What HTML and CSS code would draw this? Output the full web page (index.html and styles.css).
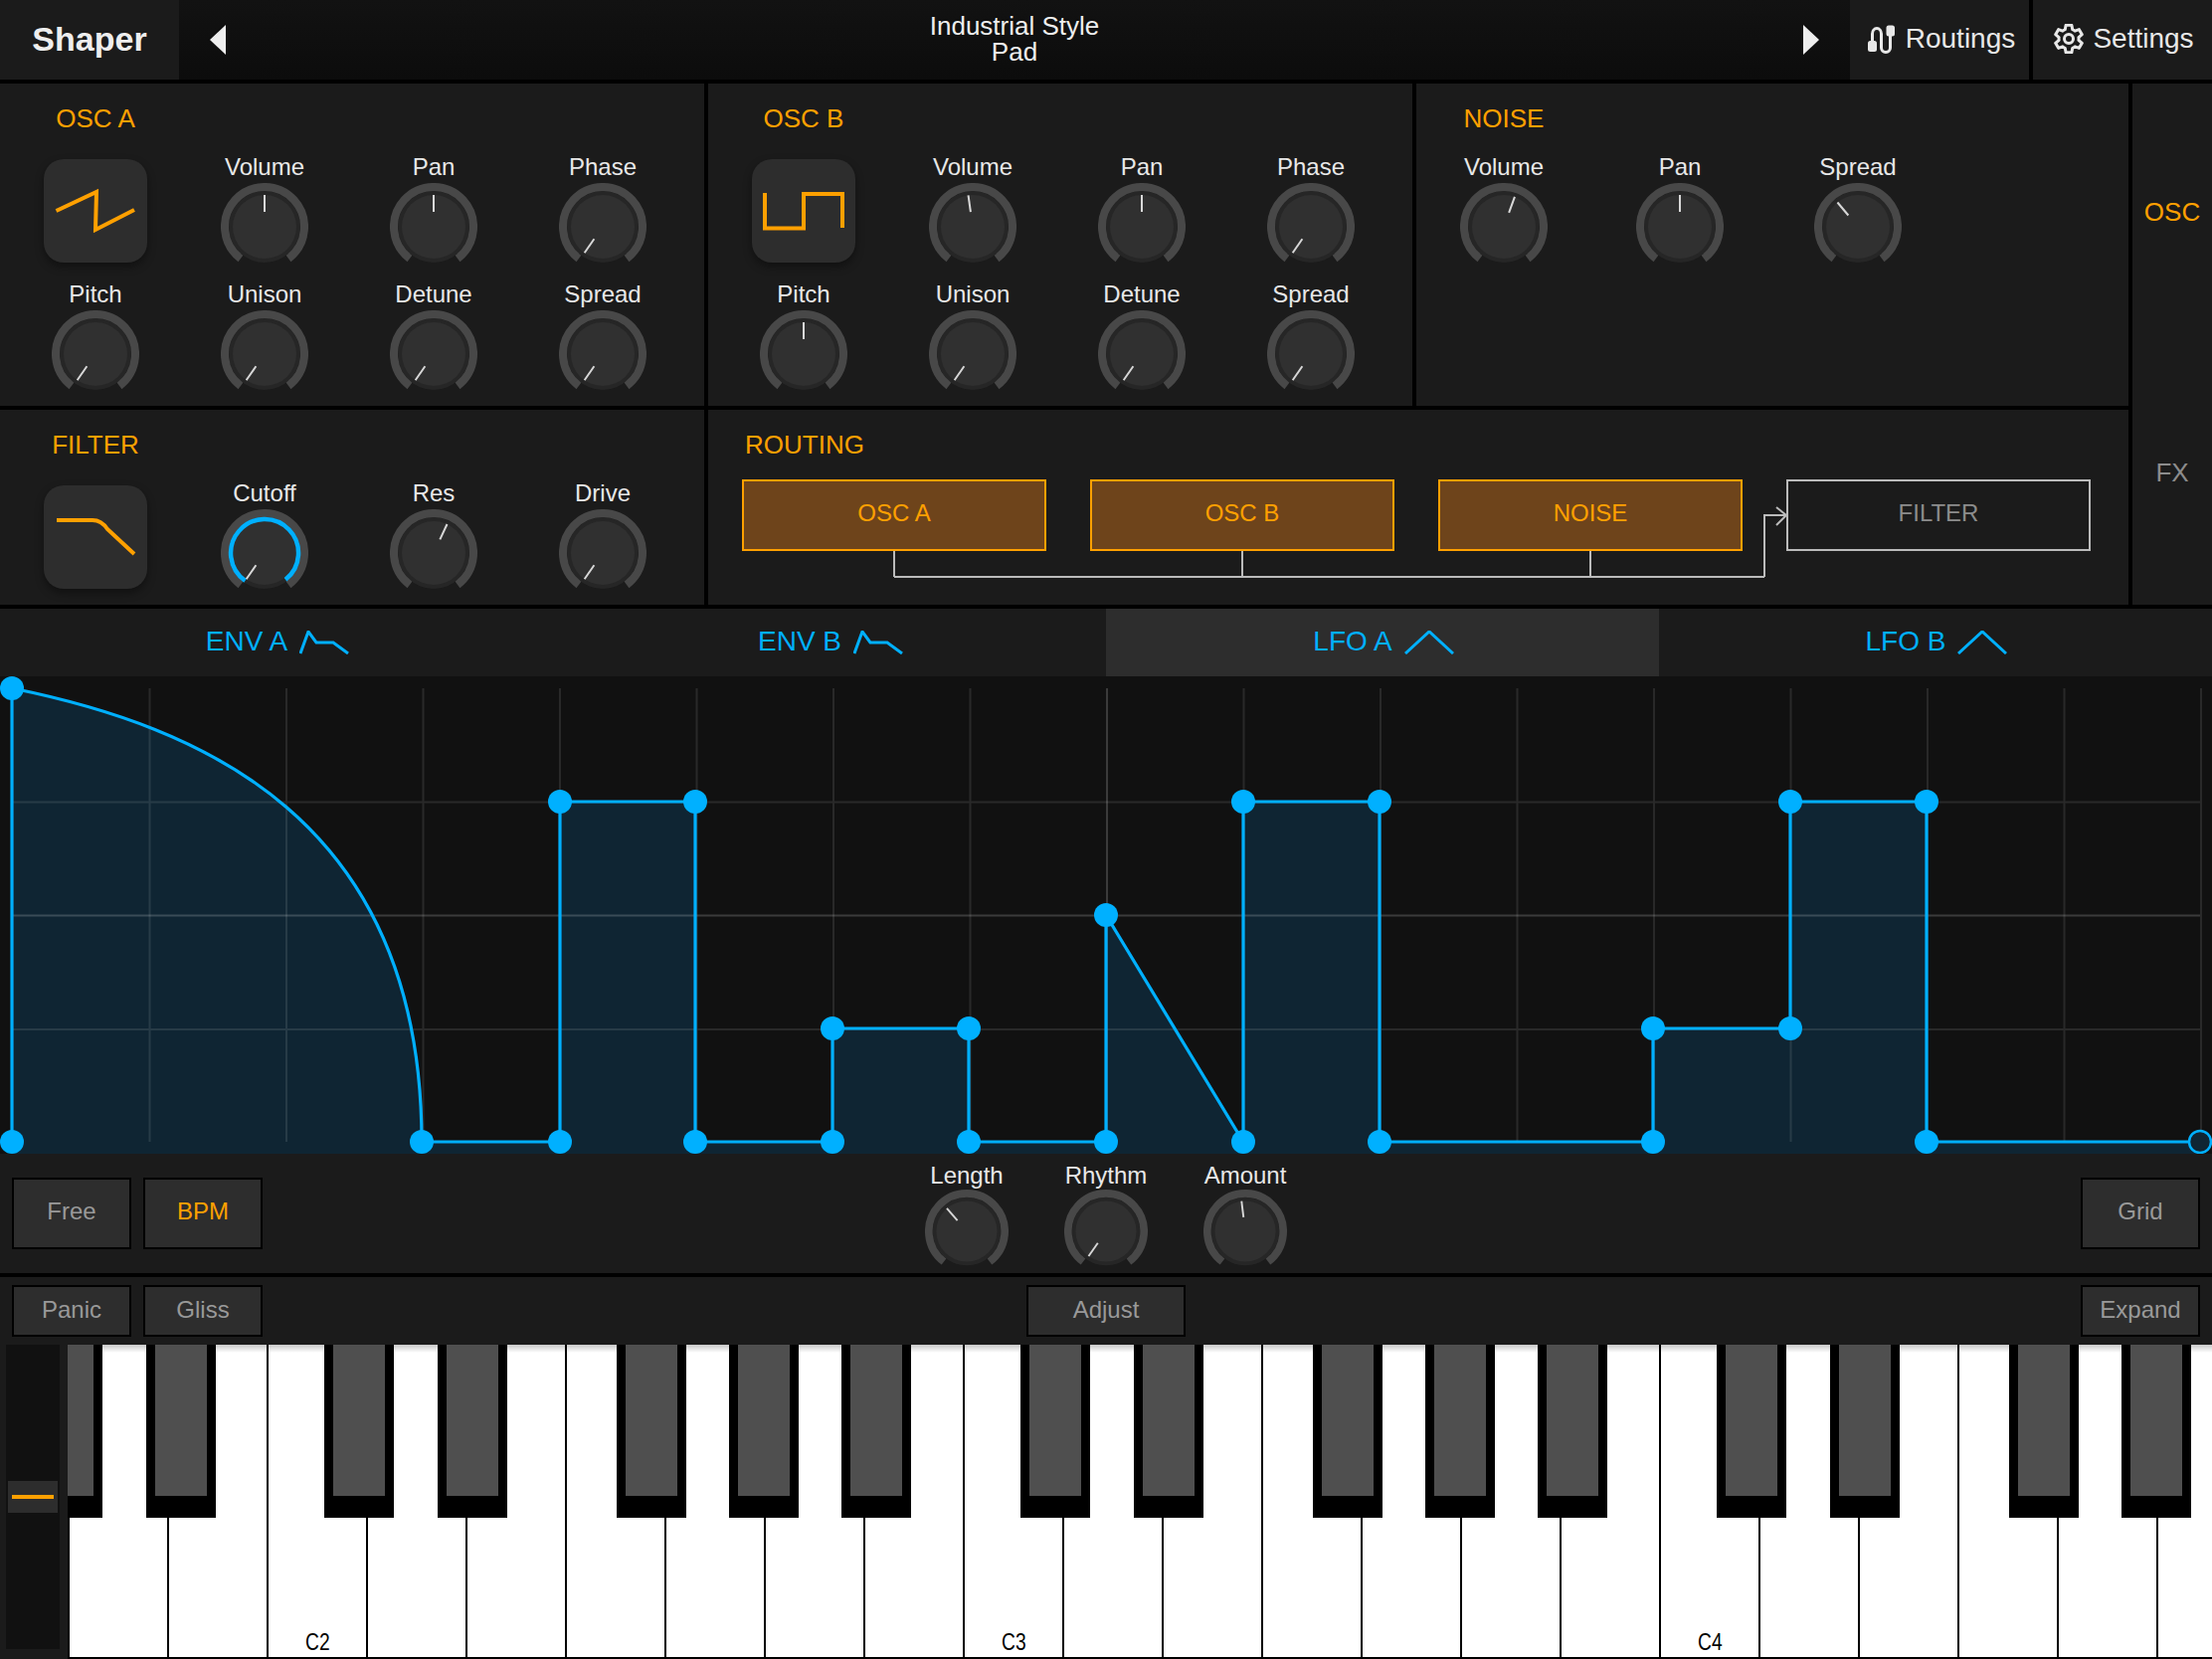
FILE: index.html
```
<!DOCTYPE html>
<html>
<head>
  <meta charset="utf-8">
  <meta name="viewport" content="width=device-width, initial-scale=1">
  <title>Shaper</title>
  <link rel="stylesheet" href="styles.css">
</head>
<body>
  <!-- Piezas comunes de los knobs -->
  <svg class="defs">
    <symbol id="knob-base" viewBox="0 0 88 88">
      <circle class="knob-ring" cx="44" cy="44" r="36"/>
      <circle class="knob-cap" cx="44" cy="44" r="32"/>
      <path class="knob-arc" d="M19.93 75.94A40 40 0 1 1 68.07 75.94"/>
    </symbol>
  </svg>

  <div id="app">
    <header class="topbar">
      <div class="brand">Shaper</div>
      <div class="preset">
        <span class="arrow arrow-left"></span>
        <div class="preset-name">Industrial Style<br>Pad</div>
        <span class="arrow arrow-right"></span>
      </div>
      <div class="top-btn">
        <svg class="top-icon" viewBox="0 0 30 30">
          <path d="M5.5 18V10a4.5 5.5 0 0 1 9 0V24a4.5 4.5 0 0 0 9 0V12"/>
          <rect class="plug" x="1" y="17" width="9" height="11" rx="2.5"/>
          <rect class="plug" x="19.5" y="1.5" width="8.5" height="11" rx="2.5"/>
        </svg>
        Routings
      </div>
      <div class="top-btn settings">
        <svg class="top-icon" viewBox="0 0 30 30">
          <path d="M11.25 5.73L12.09 1.31H17.91L18.75 5.73A10 10 0 0 1 21.16 7.12L25.4 5.63L28.32 10.67L24.9 13.61A10 10 0 0 1 24.9 16.39L28.32 19.33L25.4 24.37L21.16 22.88A10 10 0 0 1 18.75 24.27L17.91 28.69H12.09L11.25 24.27A10 10 0 0 1 8.84 22.88L4.6 24.37L1.68 19.33L5.1 16.39A10 10 0 0 1 5.1 13.61L1.68 10.67L4.6 5.63L8.84 7.12A10 10 0 0 1 11.25 5.73Z"/>
          <circle cx="15" cy="15" r="4.5"/>
        </svg>
        Settings
      </div>
    </header>

    <section class="modules">
      <div class="panel">
        <h2 class="panel-title osc-title">OSC A</h2>
        <div class="knob-grid">
          <div class="wave-btn">
            <svg viewBox="0 0 104 104"><path d="M12.5 52L53 33L52 71L91 51"/></svg>
          </div>
          <div class="ctl"><span class="ctl-label">Volume</span><svg class="knob" viewBox="0 0 88 88"><use href="#knob-base"/><line class="tick" x1="44" y1="12" x2="44" y2="29"/></svg></div>
          <div class="ctl"><span class="ctl-label">Pan</span><svg class="knob" viewBox="0 0 88 88"><use href="#knob-base"/><line class="tick" x1="44" y1="12" x2="44" y2="29"/></svg></div>
          <div class="ctl"><span class="ctl-label">Phase</span><svg class="knob" viewBox="0 0 88 88"><use href="#knob-base"/><line class="tick" x1="44" y1="12" x2="44" y2="29" transform="rotate(-145 44 44)"/></svg></div>
          <div class="ctl"><span class="ctl-label">Pitch</span><svg class="knob" viewBox="0 0 88 88"><use href="#knob-base"/><line class="tick" x1="44" y1="12" x2="44" y2="29" transform="rotate(-145 44 44)"/></svg></div>
          <div class="ctl"><span class="ctl-label">Unison</span><svg class="knob" viewBox="0 0 88 88"><use href="#knob-base"/><line class="tick" x1="44" y1="12" x2="44" y2="29" transform="rotate(-145 44 44)"/></svg></div>
          <div class="ctl"><span class="ctl-label">Detune</span><svg class="knob" viewBox="0 0 88 88"><use href="#knob-base"/><line class="tick" x1="44" y1="12" x2="44" y2="29" transform="rotate(-145 44 44)"/></svg></div>
          <div class="ctl"><span class="ctl-label">Spread</span><svg class="knob" viewBox="0 0 88 88"><use href="#knob-base"/><line class="tick" x1="44" y1="12" x2="44" y2="29" transform="rotate(-145 44 44)"/></svg></div>
        </div>
      </div>

      <div class="panel">
        <h2 class="panel-title osc-title">OSC B</h2>
        <div class="knob-grid">
          <div class="wave-btn">
            <svg viewBox="0 0 104 104"><path d="M13 34V69.5H52V35H91V69"/></svg>
          </div>
          <div class="ctl"><span class="ctl-label">Volume</span><svg class="knob" viewBox="0 0 88 88"><use href="#knob-base"/><line class="tick" x1="44" y1="12" x2="44" y2="29" transform="rotate(-8 44 44)"/></svg></div>
          <div class="ctl"><span class="ctl-label">Pan</span><svg class="knob" viewBox="0 0 88 88"><use href="#knob-base"/><line class="tick" x1="44" y1="12" x2="44" y2="29"/></svg></div>
          <div class="ctl"><span class="ctl-label">Phase</span><svg class="knob" viewBox="0 0 88 88"><use href="#knob-base"/><line class="tick" x1="44" y1="12" x2="44" y2="29" transform="rotate(-145 44 44)"/></svg></div>
          <div class="ctl"><span class="ctl-label">Pitch</span><svg class="knob" viewBox="0 0 88 88"><use href="#knob-base"/><line class="tick" x1="44" y1="12" x2="44" y2="29"/></svg></div>
          <div class="ctl"><span class="ctl-label">Unison</span><svg class="knob" viewBox="0 0 88 88"><use href="#knob-base"/><line class="tick" x1="44" y1="12" x2="44" y2="29" transform="rotate(-145 44 44)"/></svg></div>
          <div class="ctl"><span class="ctl-label">Detune</span><svg class="knob" viewBox="0 0 88 88"><use href="#knob-base"/><line class="tick" x1="44" y1="12" x2="44" y2="29" transform="rotate(-145 44 44)"/></svg></div>
          <div class="ctl"><span class="ctl-label">Spread</span><svg class="knob" viewBox="0 0 88 88"><use href="#knob-base"/><line class="tick" x1="44" y1="12" x2="44" y2="29" transform="rotate(-145 44 44)"/></svg></div>
        </div>
      </div>

      <div class="panel">
        <h2 class="panel-title noise-title">NOISE</h2>
        <div class="knob-grid noise-grid">
          <div class="ctl"><span class="ctl-label">Volume</span><svg class="knob" viewBox="0 0 88 88"><use href="#knob-base"/><line class="tick" x1="44" y1="12" x2="44" y2="29" transform="rotate(20 44 44)"/></svg></div>
          <div class="ctl"><span class="ctl-label">Pan</span><svg class="knob" viewBox="0 0 88 88"><use href="#knob-base"/><line class="tick" x1="44" y1="12" x2="44" y2="29"/></svg></div>
          <div class="ctl"><span class="ctl-label">Spread</span><svg class="knob" viewBox="0 0 88 88"><use href="#knob-base"/><line class="tick" x1="44" y1="12" x2="44" y2="29" transform="rotate(-40 44 44)"/></svg></div>
        </div>
      </div>

      <aside class="side-tabs">
        <div class="side-tab active">OSC</div>
        <div class="side-tab">FX</div>
      </aside>

      <div class="panel">
        <h2 class="panel-title osc-title">FILTER</h2>
        <div class="knob-grid">
          <div class="wave-btn">
            <svg viewBox="0 0 104 104"><path d="M13 35H49Q58 35 64 44L91 69"/></svg>
          </div>
          <div class="ctl"><span class="ctl-label">Cutoff</span><svg class="knob" viewBox="0 0 88 88"><use href="#knob-base"/><path class="knob-value" d="M24.5 71.85A34 34 0 1 1 65 70.8"/><line class="tick" x1="44" y1="12" x2="44" y2="29" transform="rotate(-145 44 44)"/></svg></div>
          <div class="ctl"><span class="ctl-label">Res</span><svg class="knob" viewBox="0 0 88 88"><use href="#knob-base"/><line class="tick" x1="44" y1="12" x2="44" y2="29" transform="rotate(25 44 44)"/></svg></div>
          <div class="ctl"><span class="ctl-label">Drive</span><svg class="knob" viewBox="0 0 88 88"><use href="#knob-base"/><line class="tick" x1="44" y1="12" x2="44" y2="29" transform="rotate(-145 44 44)"/></svg></div>
        </div>
      </div>

      <div class="panel routing">
        <h2 class="panel-title routing-title">ROUTING</h2>
        <div class="route-row">
          <div class="route-box on">OSC A</div>
          <div class="route-box on">OSC B</div>
          <div class="route-box on">NOISE</div>
          <div class="route-box">FILTER</div>
        </div>
        <!-- Cables entre las cajas, coordenadas relativas al panel -->
        <svg class="route-lines" viewBox="0 0 1428 196">
          <path d="M187 142V168M537 142V168M887 142V168"/>
          <path class="bus" d="M187 168H1062"/>
          <path d="M1062 168V106H1084M1074 98L1084 106L1074 116"/>
        </svg>
      </div>
    </section>

    <nav class="env-tabs">
      <div class="env-tab"><span class="env-name">ENV A</span><svg class="tab-icon" viewBox="0 0 50 24"><path d="M1 23L9 1L17 12H34L49 23"/></svg></div>
      <div class="env-tab"><span class="env-name">ENV B</span><svg class="tab-icon" viewBox="0 0 50 24"><path d="M1 23L9 1L17 12H34L49 23"/></svg></div>
      <div class="env-tab active"><span class="env-name">LFO A</span><svg class="tab-icon" viewBox="0 0 50 24"><path d="M1 23L25 1L49 23"/></svg></div>
      <div class="env-tab"><span class="env-name">LFO B</span><svg class="tab-icon" viewBox="0 0 50 24"><path d="M1 23L25 1L49 23"/></svg></div>
    </nav>

    <!-- Editor de la forma, coordenadas absolutas de la ventana -->
    <svg class="shape" viewBox="0 680 2224 480">
      <path class="shape-fill" d="M12 692C200 730 424 822 424 1148H563V806H699V1148H837V1034H974V1148H1112V920L1250 1148V806H1387V1148H1662V1034H1800V806H1937V1148H2212V1160H12Z"/>
      <path class="grid-line" d="M150.5 692V1148M288 692V1148M425.5 692V1148M563 692V1148M700.5 692V1148M838 692V1148M975.5 692V1148M1250.5 692V1148M1388 692V1148M1525.5 692V1148M1663 692V1148M1800.5 692V1148M1938 692V1148M2075.5 692V1148M2213 692V1148M12 806.5H2212M12 1035H2212"/>
      <path class="grid-line strong" d="M1113 692V1148M12 920.5H2212"/>
      <path class="shape-line" d="M12 692V1148M12 692C200 730 424 822 424 1148H563V806H699V1148H837V1034H974V1148H1112V920L1250 1148V806H1387V1148H1662V1034H1800V806H1937V1148H2200"/>
      <g class="dots">
        <circle cx="12" cy="692" r="12"/><circle cx="12" cy="1148" r="12"/>
        <circle cx="424" cy="1148" r="12"/><circle cx="563" cy="1148" r="12"/>
        <circle cx="563" cy="806" r="12"/><circle cx="699" cy="806" r="12"/>
        <circle cx="699" cy="1148" r="12"/><circle cx="837" cy="1148" r="12"/>
        <circle cx="837" cy="1034" r="12"/><circle cx="974" cy="1034" r="12"/>
        <circle cx="974" cy="1148" r="12"/><circle cx="1112" cy="1148" r="12"/>
        <circle cx="1112" cy="920" r="12"/><circle cx="1250" cy="1148" r="12"/>
        <circle cx="1250" cy="806" r="12"/><circle cx="1387" cy="806" r="12"/>
        <circle cx="1387" cy="1148" r="12"/><circle cx="1662" cy="1148" r="12"/>
        <circle cx="1662" cy="1034" r="12"/><circle cx="1800" cy="1034" r="12"/>
        <circle cx="1800" cy="806" r="12"/><circle cx="1937" cy="806" r="12"/>
        <circle cx="1937" cy="1148" r="12"/>
      </g>
      <circle class="dot-end" cx="2212" cy="1148" r="11"/>
    </svg>

    <section class="shape-controls">
      <div class="btn-group">
        <div class="btn tall">Free</div>
        <div class="btn tall on">BPM</div>
      </div>
      <div class="small-knobs">
        <div class="ctl small"><span class="ctl-label">Length</span><svg class="knob" viewBox="0 0 88 88"><use href="#knob-base"/><line class="tick" x1="44" y1="12" x2="44" y2="29" transform="rotate(-41 44 44)"/></svg></div>
        <div class="ctl small"><span class="ctl-label">Rhythm</span><svg class="knob" viewBox="0 0 88 88"><use href="#knob-base"/><line class="tick" x1="44" y1="12" x2="44" y2="29" transform="rotate(-145 44 44)"/></svg></div>
        <div class="ctl small"><span class="ctl-label">Amount</span><svg class="knob" viewBox="0 0 88 88"><use href="#knob-base"/><line class="tick" x1="44" y1="12" x2="44" y2="29" transform="rotate(-7 44 44)"/></svg></div>
      </div>
      <div class="btn-group right">
        <div class="btn tall">Grid</div>
      </div>
    </section>

    <section class="kb-actions">
      <div class="btn-group">
        <div class="btn">Panic</div>
        <div class="btn">Gliss</div>
      </div>
      <div class="btn adjust">Adjust</div>
      <div class="btn-group right">
        <div class="btn">Expand</div>
      </div>
    </section>

    <section class="keyboard">
      <div class="pitch-strip">
        <div class="pitch-thumb"><span></span></div>
      </div>
      <div class="keys">
        <div class="white-row">
          <div class="white-key"></div><div class="white-key"></div>
          <div class="white-key"><span>C2</span></div>
          <div class="white-key"></div><div class="white-key"></div><div class="white-key"></div><div class="white-key"></div><div class="white-key"></div><div class="white-key"></div>
          <div class="white-key"><span>C3</span></div>
          <div class="white-key"></div><div class="white-key"></div><div class="white-key"></div><div class="white-key"></div><div class="white-key"></div><div class="white-key"></div>
          <div class="white-key"><span>C4</span></div>
          <div class="white-key"></div><div class="white-key"></div><div class="white-key"></div><div class="white-key"></div><div class="white-key"></div>
        </div>
        <div class="black-key" style="left:-35px"></div>
        <div class="black-key" style="left:79px"></div>
        <div class="black-key" style="left:258px"></div>
        <div class="black-key" style="left:372px"></div>
        <div class="black-key" style="left:552px"></div>
        <div class="black-key" style="left:665px"></div>
        <div class="black-key" style="left:778px"></div>
        <div class="black-key" style="left:958px"></div>
        <div class="black-key" style="left:1072px"></div>
        <div class="black-key" style="left:1252px"></div>
        <div class="black-key" style="left:1365px"></div>
        <div class="black-key" style="left:1478px"></div>
        <div class="black-key" style="left:1658px"></div>
        <div class="black-key" style="left:1772px"></div>
        <div class="black-key" style="left:1952px"></div>
        <div class="black-key" style="left:2065px"></div>
      </div>
    </section>
  </div>
</body>
</html>
```

FILE: styles.css
```
* {
  box-sizing: border-box;
}

body {
  margin: 0;
  background: #000;
  font-family: "Liberation Sans", Arial, sans-serif;
  font-size: 24px;
  color: #e8e8e8;
  overflow: hidden;
}

.defs {
  position: absolute;
  width: 0;
  height: 0;
}

#app {
  width: 2224px;
  height: 1668px;
  display: flex;
  flex-direction: column;
  overflow: hidden;
}

/* barra superior */
.topbar {
  height: 80px;
  margin-bottom: 4px;
  display: flex;
  flex: none;
  gap: 0;
}

.brand {
  width: 180px;
  background: #1b1b1b;
  font-size: 34px;
  font-weight: bold;
  color: #eee;
  display: flex;
  align-items: center;
  justify-content: center;
  padding-bottom: 2px;
}

.preset {
  flex: 1;
  background: linear-gradient(#121212, #0c0c0c);
  display: flex;
  align-items: center;
  justify-content: space-between;
  padding: 0 31px;
}

.preset-name {
  font-size: 26px;
  line-height: 26px;
  text-align: center;
  color: #eee;
  margin-bottom: 3px;
}

.arrow {
  width: 0;
  height: 0;
  border-top: 15px solid transparent;
  border-bottom: 15px solid transparent;
}

.arrow-left {
  border-right: 16px solid #eee;
}

.arrow-right {
  border-left: 16px solid #eee;
}

.top-btn {
  width: 180px;
  background: #1b1b1b;
  font-size: 28px;
  display: flex;
  align-items: center;
  justify-content: center;
  gap: 9px;
  padding: 0 0 2px 3px;
}

.top-btn.settings {
  margin-left: 4px;
}

.top-icon {
  width: 30px;
  height: 30px;
  fill: none;
  stroke: #e8e8e8;
  stroke-width: 3;
  stroke-linejoin: round;
}

.top-icon .plug {
  fill: #e8e8e8;
  stroke: none;
}

/* modulos */
.modules {
  display: grid;
  grid-template-columns: 708px 708px 716px 80px;
  grid-template-rows: 324px 196px;
  gap: 4px;
  flex: none;
}

.panel {
  background: #1b1b1b;
  padding-top: 20px;
}

.panel-title {
  margin: 0 0 22px;
  font-size: 26px;
  line-height: 30px;
  font-weight: normal;
  color: #ffa000;
}

.osc-title {
  width: 170px;
  margin-left: 11px;
  text-align: center;
}

.noise-title {
  width: 176px;
  text-align: center;
}

.routing-title {
  padding-left: 37px;
  margin-bottom: 20px;
}

.knob-grid {
  display: grid;
  grid-template-columns: repeat(4, 170px);
  grid-auto-rows: 128px;
  padding-left: 11px;
}

.noise-grid {
  grid-template-columns: 176px 178px 180px;
  padding-left: 0;
}

.ctl {
  display: flex;
  flex-direction: column;
  align-items: center;
}

.ctl-label {
  line-height: 24px;
  white-space: nowrap;
}

.knob {
  width: 88px;
  height: 88px;
  margin-top: 4px;
}

.knob-ring {
  fill: #262626;
}

.knob-cap {
  fill: #303030;
}

.knob-arc {
  fill: none;
  stroke: #484848;
  stroke-width: 8;
}

.knob-value {
  fill: none;
  stroke: #00b0ff;
  stroke-width: 4.5;
}

.tick {
  stroke: #d8d8d8;
  stroke-width: 2;
}

.wave-btn {
  width: 104px;
  height: 104px;
  margin-top: 4px;
  justify-self: center;
  background: #2d2d2d;
  border-radius: 20px;
  box-shadow: 0 4px 8px rgba(0, 0, 0, 0.4);
}

.wave-btn svg {
  display: block;
  fill: none;
  stroke: #ffa000;
  stroke-width: 4;
}

.side-tabs {
  grid-column: 4;
  grid-row: 1 / span 2;
  background: #1b1b1b;
}

.side-tab {
  height: 262px;
  padding-bottom: 4px;
  display: flex;
  align-items: center;
  justify-content: center;
  font-size: 26px;
  color: #8c8c8c;
}

.side-tab.active {
  color: #ffa000;
}

.routing {
  grid-column: 2 / span 2;
  position: relative;
}

.route-row {
  display: flex;
  gap: 44px;
  padding-left: 34px;
}

.route-box {
  width: 306px;
  height: 72px;
  border: 2px solid #bbb;
  color: #8c8c8c;
  display: flex;
  align-items: center;
  justify-content: center;
  padding-bottom: 4px;
}

.route-box.on {
  border-color: #ffa000;
  background: #6e441b;
  color: #ffa000;
}

.route-lines {
  position: absolute;
  left: 0;
  top: 0;
  width: 1428px;
  height: 196px;
  fill: none;
  stroke: #bbb;
  stroke-width: 2;
}

/* pestañas de envolventes */
.env-tabs {
  display: flex;
  height: 72px;
  flex: none;
  border-top: 4px solid #000;
}

.env-tab {
  width: 556px;
  background: #1b1b1b;
  color: #00b0ff;
  font-size: 28px;
  display: flex;
  align-items: center;
  justify-content: center;
  gap: 12px;
  padding-left: 2px;
}

.env-name {
  margin-bottom: 2px;
}

.env-tab.active {
  background: #2d2d2d;
}

.tab-icon {
  width: 50px;
  height: 24px;
  fill: none;
  stroke: #00b0ff;
  stroke-width: 3;
}

/* forma */
.shape {
  display: block;
  width: 2224px;
  height: 480px;
  flex: none;
  background: #111;
}

.shape-fill {
  fill: #0f2533;
}

.grid-line {
  fill: none;
  stroke: #fff;
  stroke-opacity: 0.1;
  stroke-width: 2;
}

.grid-line.strong {
  stroke-opacity: 0.18;
}

.shape-line {
  fill: none;
  stroke: #00b0ff;
  stroke-width: 3.2;
}

.dots {
  fill: #00b0ff;
}

.dot-end {
  fill: #0f2533;
  stroke: #00b0ff;
  stroke-width: 2.5;
}

.shape-controls {
  height: 120px;
  flex: none;
  background: #1b1b1b;
  display: grid;
  grid-template-columns: 1fr auto 1fr;
  padding: 24px 12px 0;
  margin-bottom: 4px;
}

.btn-group {
  display: flex;
  gap: 12px;
}

.btn-group.right {
  justify-content: flex-end;
}

.btn {
  width: 120px;
  height: 52px;
  background: #2d2d2d;
  border: 2px solid #000;
  color: #999;
  display: flex;
  align-items: center;
  justify-content: center;
  padding-bottom: 2px;
}

.btn.tall {
  height: 72px;
  padding-bottom: 4px;
}

.btn.on {
  color: #ffa000;
}

.small-knobs {
  display: flex;
  margin-top: -14px;
}

.ctl.small {
  width: 140px;
}

.ctl.small .knob {
  width: 84px;
  height: 84px;
  margin-top: 2px;
}

.kb-actions {
  height: 68px;
  flex: none;
  background: #1b1b1b;
  display: grid;
  grid-template-columns: 1fr auto 1fr;
  padding: 8px 12px 0;
}

.btn.adjust {
  width: 160px;
}

/* teclado */
.keyboard {
  height: 316px;
  flex: none;
  background: #1b1b1b;
  display: flex;
  padding-left: 6px;
}

.pitch-strip {
  width: 54px;
  height: 306px;
  margin-right: 8px;
  background: #111;
  padding: 137px 2px 0;
}

.pitch-thumb {
  height: 32px;
  background: #2d2d2d;
  display: flex;
  align-items: center;
  justify-content: center;
}

.pitch-thumb span {
  width: 42px;
  height: 4px;
  background: #ffa000;
}

.keys {
  flex: 1;
  position: relative;
  overflow: hidden;
  background: #000;
}

.white-row {
  display: flex;
  gap: 2px;
  height: 314px;
  padding-left: 2px;
}

.white-key {
  flex: none;
  width: 98px;
  background: linear-gradient(#c8c8c8, #fff 8px);
  display: flex;
  align-items: flex-end;
  justify-content: center;
  color: #000;
}

.white-key span {
  line-height: 24px;
  padding-bottom: 3px;
  transform: scaleX(0.8);
}

.black-key {
  position: absolute;
  top: 0;
  width: 70px;
  height: 174px;
  background: #000;
  padding: 0 9px 22px;
}

.black-key::before {
  content: "";
  display: block;
  height: 100%;
  background: #4f4f4f;
}
```
